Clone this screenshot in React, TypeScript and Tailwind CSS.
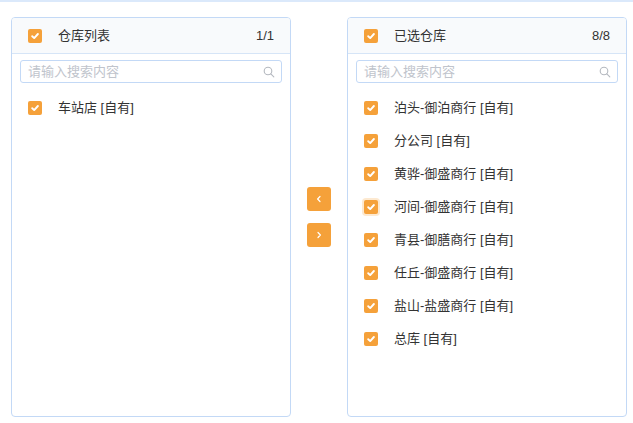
import React from "react";

const leftItems = ["车站店 [自有]"];
const rightItems = [
  "泊头-御泊商行 [自有]",
  "分公司 [自有]",
  "黄骅-御盛商行 [自有]",
  "河间-御盛商行 [自有]",
  "青县-御膳商行 [自有]",
  "任丘-御盛商行 [自有]",
  "盐山-盐盛商行 [自有]",
  "总库 [自有]",
];

function Check({ focus }: { focus?: boolean }) {
  return (
    <span
      className={
        "flex h-[14px] w-[14px] shrink-0 items-center justify-center rounded-[2px] bg-[#f5a13a] " +
        (focus ? "shadow-[0_0_0_2px_#fde9d0]" : "")
      }
    >
      <svg width="10" height="10" viewBox="0 0 10 10" fill="none">
        <path d="M2.2 5.2 L4.2 7.1 L7.9 3" stroke="#fff" strokeWidth="1.9" strokeLinecap="round" strokeLinejoin="round" />
      </svg>
    </span>
  );
}

function Panel({ title, count, items, focusIndex }: { title: string; count: string; items: string[]; focusIndex?: number }) {
  return (
    <div className="flex h-[400px] w-[280px] flex-col overflow-hidden rounded-[4px] border border-[#c3d9f6] bg-white">
      <div className="flex h-[36px] shrink-0 items-center border-b border-[#d6e5f7] bg-[#f8fafc] pl-[16px] pr-[16px]">
        <Check />
        <span className="ml-[16px] flex-1 text-[13px] text-[#333]">{title}</span>
        <span className="text-[13px] text-[#333]">{count}</span>
      </div>
      <div className="px-[8px] pt-[6px]">
        <div className="flex h-[23px] items-center rounded-[3px] border border-[#c3d9f6] pl-[7px] pr-[6px]">
          <span className="flex-1 text-[13px] text-[#c0c4cc]">请输入搜索内容</span>
          <svg width="12" height="12" viewBox="0 0 12 12" fill="none">
            <circle cx="5" cy="5" r="3.8" stroke="#b4b8bf" strokeWidth="1.1" />
            <path d="M7.8 7.8 L10.8 10.8" stroke="#b4b8bf" strokeWidth="1.1" strokeLinecap="round" />
          </svg>
        </div>
      </div>
      <div className="flex flex-col pt-[8px]">
        {items.map((it, i) => (
          <div key={i} className="flex h-[33px] items-center pl-[16px]">
            <Check focus={i === focusIndex} />
            <span className="ml-[16px] text-[13px] text-[#333]">{it}</span>
          </div>
        ))}
      </div>
    </div>
  );
}

export default function App() {
  return (
    <div
      className="h-[423px] w-[633px] border-t-2 border-[#dbe9fb] bg-white"
      style={{ fontFamily: '"Liberation Sans", "Noto Sans CJK SC", sans-serif' }}
    >
      <div className="flex items-center pl-[11px] pt-[15px]">
        <Panel title="仓库列表" count="1/1" items={leftItems} />
        <div className="flex w-[56px] flex-col items-center gap-[12px]">
          <button className="flex h-[24px] w-[24px] items-center justify-center rounded-[3px] bg-[#f5a13a]">
            <svg width="8" height="8" viewBox="0 0 8 8" fill="none">
              <path d="M5 1.5 L2.6 4 L5 6.5" stroke="#fff" strokeWidth="1.2" strokeLinecap="round" strokeLinejoin="round" />
            </svg>
          </button>
          <button className="flex h-[24px] w-[24px] items-center justify-center rounded-[3px] bg-[#f5a13a]">
            <svg width="8" height="8" viewBox="0 0 8 8" fill="none">
              <path d="M3 1.5 L5.4 4 L3 6.5" stroke="#fff" strokeWidth="1.2" strokeLinecap="round" strokeLinejoin="round" />
            </svg>
          </button>
        </div>
        <Panel title="已选仓库" count="8/8" items={rightItems} focusIndex={3} />
      </div>
    </div>
  );
}
